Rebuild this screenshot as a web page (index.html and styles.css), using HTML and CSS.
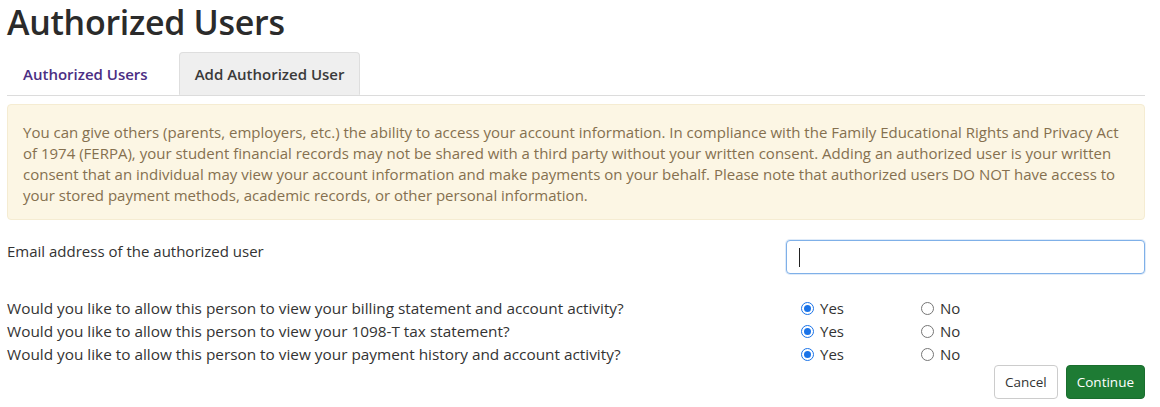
FILE: index.html
```html
<!DOCTYPE html>
<html lang="en">
<head>
<meta charset="utf-8">
<title>Authorized Users</title>
<link rel="stylesheet" href="styles.css">
</head>
<body>
<main class="page">
  <h1 class="title">Authorized Users</h1>
  <nav class="tabs">
    <a class="tab" href="#">Authorized Users</a>
    <a class="tab active" href="#">Add Authorized User</a>
  </nav>
  <div class="alert">You can give others (parents, employers, etc.) the ability to access your account information. In compliance with the Family Educational Rights and Privacy Act of 1974 (FERPA), your student financial records may not be shared with a third party without your written consent. Adding an authorized user is your written consent that an individual may view your account information and make payments on your behalf. Please note that authorized users DO NOT have access to your stored payment methods, academic records, or other personal information.</div>
  <form class="form">
    <div class="row email-row">
      <label class="label" for="email">Email address of the authorized user</label>
      <div class="field"><input id="email" class="input" type="text" value=""><span class="caret"></span></div>
    </div>
    <div class="questions">
      <div class="row q">
        <span class="label">Would you like to allow this person to view your billing statement and account activity?</span>
        <div class="field radios">
          <label class="opt"><span class="radio on"></span>Yes</label>
          <label class="opt"><span class="radio"></span>No</label>
        </div>
      </div>
      <div class="row q">
        <span class="label">Would you like to allow this person to view your 1098-T tax statement?</span>
        <div class="field radios">
          <label class="opt"><span class="radio on"></span>Yes</label>
          <label class="opt"><span class="radio"></span>No</label>
        </div>
      </div>
      <div class="row q">
        <span class="label">Would you like to allow this person to view your payment history and account activity?</span>
        <div class="field radios">
          <label class="opt"><span class="radio on"></span>Yes</label>
          <label class="opt"><span class="radio"></span>No</label>
        </div>
      </div>
    </div>
    <div class="actions">
      <button type="button" class="btn cancel">Cancel</button>
      <button type="button" class="btn primary">Continue</button>
    </div>
  </form>
</main>
</body>
</html>
```
FILE: styles.css
```css
* { box-sizing: border-box; }
html, body { margin: 0; background: #fff; }
body {
  font-family: "Open Sans", "Noto Sans", sans-serif;
  color: #333;
  font-size: 15px;
}
.page {
  width: 1138px;
  margin-left: 7px;
}
.title {
  margin: 0;
  font-size: 34px;
  font-weight: 600;
  line-height: 44px;
  color: #2b2b2b;
  letter-spacing: -0.3px;
}
.tabs {
  display: flex;
  margin-top: 8px;
  border-bottom: 1px solid #dcdcdc;
  height: 44px;
}
.tab {
  display: block;
  padding: 0 15px;
  line-height: 43px;
  font-size: 15px;
  font-weight: 600;
  color: #4b2e83;
  text-decoration: none;
  border: 1px solid transparent;
  border-radius: 4px 4px 0 0;
  margin-right: 15px;
}
.tab.active {
  color: #3a3a3a;
  background: #efefef;
  border-color: #dedede;
  border-bottom-color: #efefef;
}
.alert {
  margin-top: 8px;
  background: #fcf6e4;
  border: 1px solid #f5ecd2;
  border-radius: 4px;
  padding: 17px 15px 13px;
  color: #85704f;
  font-size: 15px;
  line-height: 21px;
}
.form { margin-top: 20px; }
.row {
  display: flex;
  align-items: flex-start;
}
.label {
  flex: 0 0 779px;
  color: #333;
  font-size: 15px;
}
.email-row .label { line-height: 23px; }
.field { flex: 1; position: relative; }
.input {
  display: block;
  width: 100%;
  height: 34px;
  border: 1px solid #7fb0e8;
  border-radius: 4px;
  box-shadow: 0 0 0 1px rgba(128, 176, 232, 0.25);
  outline: none;
  font: inherit;
  padding: 0 12px;
}
.caret {
  position: absolute;
  left: 13px;
  top: 8px;
  width: 1px;
  height: 19px;
  background: #222;
}
.questions { margin-top: 23px; }
.q { line-height: 23px; }
.q .label { line-height: 23px; font-size: 15.35px; }
.radios {
  display: flex;
  padding-left: 15px;
}
.opt {
  display: flex;
  align-items: center;
  width: 120px;
  color: #333;
}
.radio {
  width: 13px;
  height: 13px;
  border-radius: 50%;
  border: 1px solid #767676;
  margin-right: 6px;
  background: #fff;
  position: relative;
}
.radio.on {
  border: 1px solid #1a73e8;
  background: #fff;
}
.radio.on::after {
  content: "";
  position: absolute;
  left: 2px;
  top: 2px;
  width: 7px;
  height: 7px;
  border-radius: 50%;
  background: #1a73e8;
}
.actions {
  display: flex;
  justify-content: flex-end;
  gap: 8px;
  margin-top: -1px;
}
.btn {
  font: inherit;
  font-size: 13.5px;
  height: 34px;
  padding: 0 10px;
  border-radius: 4px;
  cursor: pointer;
}
.cancel {
  background: #fff;
  border: 1px solid #ccc;
  color: #333;
}
.primary {
  background: #1e7b34;
  border: 1px solid #1a6e2e;
  color: #fff;
}
```
